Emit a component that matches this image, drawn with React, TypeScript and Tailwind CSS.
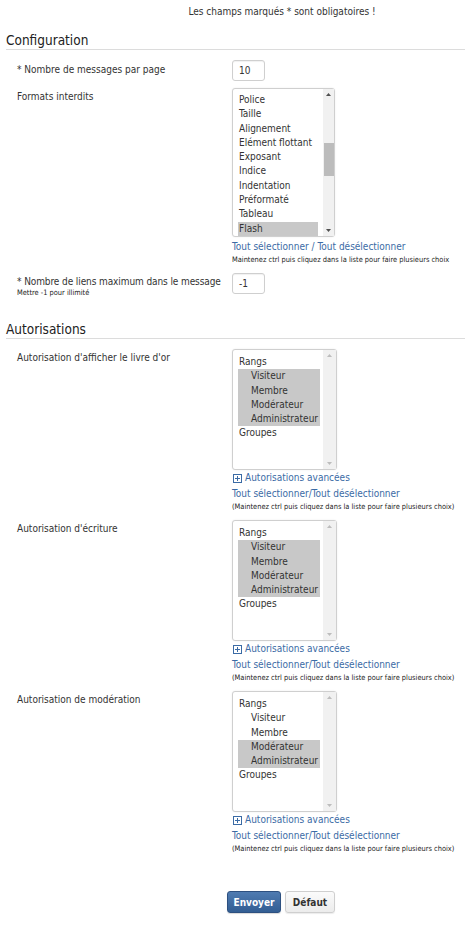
const FONT = { fontFamily: '"DejaVu Sans Condensed", "DejaVu Sans", sans-serif' }

const FORMATS = [
  { label: 'Police', sel: false },
  { label: 'Taille', sel: false },
  { label: 'Alignement', sel: false },
  { label: 'Elément flottant', sel: false },
  { label: 'Exposant', sel: false },
  { label: 'Indice', sel: false },
  { label: 'Indentation', sel: false },
  { label: 'Préformaté', sel: false },
  { label: 'Tableau', sel: false },
  { label: 'Flash', sel: true },
]

const RANGS = ['Visiteur', 'Membre', 'Modérateur', 'Administrateur']

const AUTHS = [
  { label: "Autorisation d'afficher le livre d'or", selected: [0, 1, 2, 3] },
  { label: "Autorisation d'écriture", selected: [0, 1, 2, 3] },
  { label: 'Autorisation de modération', selected: [2, 3] },
]

function Arrow({ up, faded }: { up?: boolean; faded?: boolean }) {
  return (
    <div className="flex h-[11px] items-center justify-center">
      <svg width="5" height="3" viewBox="0 0 5 3">
        <path d={up ? 'M0 3L2.5 0L5 3Z' : 'M0 0L2.5 3L5 0Z'} fill={faded ? '#bdbdbd' : '#505050'} />
      </svg>
    </div>
  )
}

function Section({ title }: { title: string }) {
  return (
    <h2 className="mx-[6px] border-b border-[#dcdcdc] text-[13.5px] leading-[17px] text-[#222]">{title}</h2>
  )
}

function SmallInput({ value }: { value: string }) {
  return (
    <div className="flex h-[21px] w-[33px] shrink-0 items-center rounded-[3px] border border-[#cfcfcf] bg-white pl-[6px] text-[10px] text-[#333] shadow-[inset_0_1px_1px_rgba(0,0,0,0.06)]">
      {value}
    </div>
  )
}

function Hint({ children }: { children: React.ReactNode }) {
  return <div className="text-[7.4px] leading-[10px] text-[#222]">{children}</div>
}

function PermBox({ selected }: { selected: number[] }) {
  return (
    <div className="flex h-[121px] w-[105px] rounded-[3px] border border-[#cfcfcf] bg-white shadow-[0_0_2px_rgba(0,0,0,0.08)]">
      <div className="flex-1 pl-[5px] pr-[3px] pt-[5px] text-[10px] leading-[14.3px] text-[#333]">
        <div className="pl-[1px]">Rangs</div>
        {RANGS.map((r, i) => (
          <div key={r} className={`pl-[13px] ${selected.includes(i) ? 'bg-[#c8c8c8]' : ''}`}>
            {r}
          </div>
        ))}
        <div className="pl-[1px]">Groupes</div>
      </div>
      <div className="flex w-[13px] flex-col justify-between bg-[#f1f1f1]">
        <Arrow up faded />
        <Arrow faded />
      </div>
    </div>
  )
}

export default function App() {
  return (
    <div className="w-[471px] whitespace-nowrap bg-white pb-[16px] text-[#333]" style={FONT}>
      <p className="pl-[93px] pt-[5px] text-center text-[10px] leading-[14px] text-[#333]">
        Les champs marqués * sont obligatoires !
      </p>

      <div className="mt-[13px]">
        <Section title="Configuration" />
        <div className="flex flex-col pl-[17px] pt-[10px] text-[10px]">
          <div className="flex">
            <div className="w-[215px] pt-[3px] leading-[14px]">* Nombre de messages par page</div>
            <SmallInput value="10" />
          </div>

          <div className="mt-[7px] flex">
            <div className="w-[215px] pt-[2px] leading-[14px]">Formats interdits</div>
            <div className="flex flex-col">
              <div className="flex h-[149px] w-[103px] rounded-[3px] border border-[#cfcfcf] bg-white shadow-[0_0_2px_rgba(0,0,0,0.08)]">
                <div className="flex-1 pl-[5px] pr-[5px] pt-[4px] text-[10px] leading-[14.3px]">
                  {FORMATS.map((f) => (
                    <div key={f.label} className={`pl-[1px] ${f.sel ? 'bg-[#c8c8c8]' : ''}`}>
                      {f.label}
                    </div>
                  ))}
                </div>
                <div className="flex w-[11px] flex-col bg-[#f1f1f1]">
                  <Arrow up />
                  <div className="flex-1 pt-[43px]">
                    <div className="mx-auto h-[33px] w-[10px] bg-[#bcbcbc]" />
                  </div>
                  <Arrow />
                </div>
              </div>
              <div className="mt-[3px] text-[10px] leading-[14px] text-[#3b6ba5]">
                Tout sélectionner / Tout désélectionner
              </div>
              <div className="mt-[1px]">
                <Hint>Maintenez ctrl puis cliquez dans la liste pour faire plusieurs choix</Hint>
              </div>
            </div>
          </div>

          <div className="mt-[8px] flex">
            <div className="w-[215px] pt-[2px]">
              <div className="leading-[13px] tracking-[-0.1px]">* Nombre de liens maximum dans le message</div>
              <div className="text-[7.4px] leading-[9px] text-[#222]">Mettre -1 pour illimité</div>
            </div>
            <SmallInput value="-1" />
          </div>
        </div>
      </div>

      <div className="mt-[24px]">
        <Section title="Autorisations" />
        <div className="flex flex-col gap-[8px] pl-[17px] pt-[10px] text-[10px]">
          {AUTHS.map((a) => (
            <div key={a.label} className="flex">
              <div className="w-[215px] pt-[2px] leading-[14px]">{a.label}</div>
              <div className="flex flex-col">
                <PermBox selected={a.selected} />
                <div className="mt-[1px] flex items-center gap-[3px] pl-[1px] text-[10px] leading-[14px] text-[#3b6ba5]">
                  <svg width="9" height="9" viewBox="0 0 9 9">
                    <rect x="0.5" y="0.5" width="8" height="8" fill="none" stroke="#3b6ba5" />
                    <path d="M2 4.5H7M4.5 2V7" stroke="#3b6ba5" />
                  </svg>
                  Autorisations avancées
                </div>
                <div className="mt-[2px] text-[10px] leading-[14px] text-[#3b6ba5]">
                  Tout sélectionner/Tout désélectionner
                </div>
                <div className="mt-[1px]">
                  <Hint>(Maintenez ctrl puis cliquez dans la liste pour faire plusieurs choix)</Hint>
                </div>
              </div>
            </div>
          ))}
        </div>
      </div>

      <div className="mt-[37px] flex gap-[4px] pl-[227px]">
        <button className="h-[22px] w-[54px] rounded-[3px] border border-[#2d5080] bg-gradient-to-b from-[#4f7bb1] to-[#335e93] text-[10px] font-bold text-white shadow-[0_1px_1px_rgba(0,0,0,0.15)]">
          Envoyer
        </button>
        <button className="h-[22px] w-[50px] rounded-[3px] border border-[#cfcfcf] bg-gradient-to-b from-[#fbfbfb] to-[#ececec] text-[10px] font-bold text-[#333] shadow-[0_1px_1px_rgba(0,0,0,0.08)]">
          Défaut
        </button>
      </div>
    </div>
  )
}
